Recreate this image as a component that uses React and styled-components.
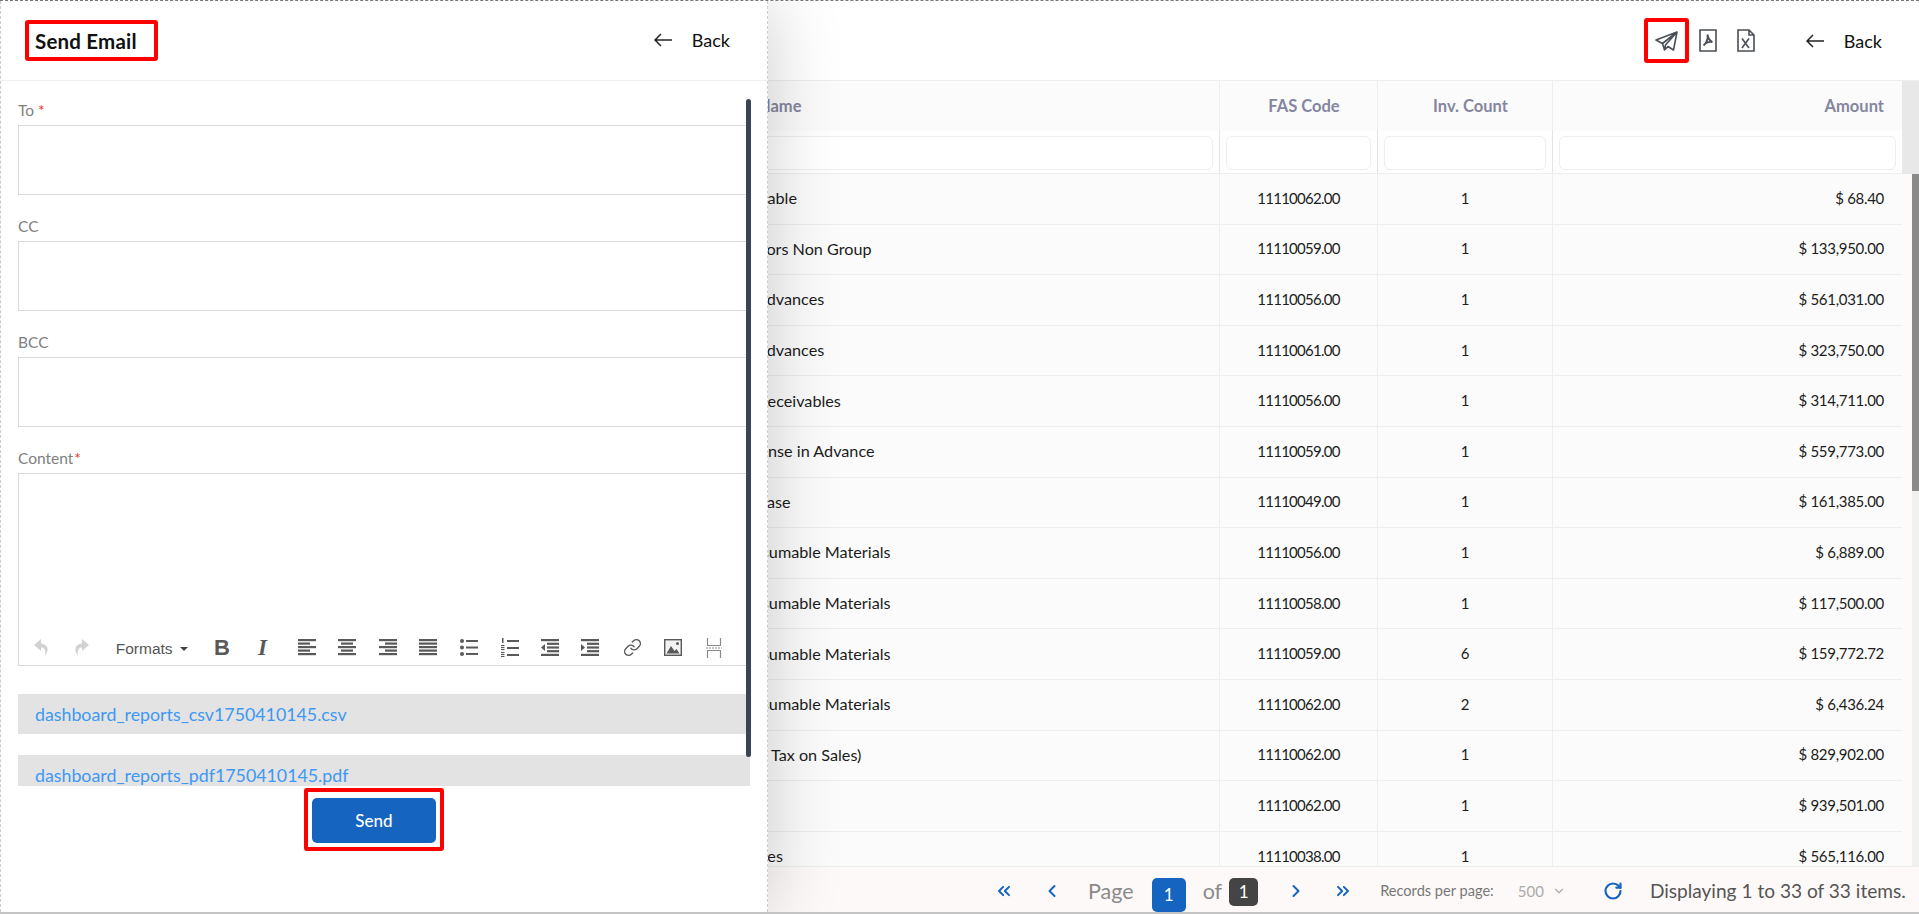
import React from 'react';
import styled, { createGlobalStyle } from 'styled-components';
import { ChevronsLeft, ChevronLeft, ChevronRight, ChevronsRight, ChevronDown, RotateCw, Link as LinkIcon } from 'lucide-react';

const Global = createGlobalStyle`
  html, body { margin: 0; padding: 0; background: #fff; font-family: Lato, "Noto Sans", sans-serif; }
  * { box-sizing: border-box; }
`;

const Page = styled.div`
  position: relative; width: 1919px; height: 914px; overflow: hidden;
  display: flex; flex-direction: column; background: #fff;
  border-top: 1px dashed #777; border-bottom: 2px solid #c4c4c4;
`;
const TopBar = styled.header`
  height: 80px; flex: none; display: flex; align-items: center; justify-content: flex-end;
  padding-right: 37px; border-bottom: 1px solid #eee; background: #fff;
`;
const Highlight = styled.div`
  border: 4px solid #f00; border-radius: 3px; display: flex; align-items: center; justify-content: center;
  width: ${p => p.$w}px; height: ${p => p.$h}px; flex: none;
`;
const IconSlot = styled.div`
  display: flex; align-items: center; margin-left: ${p => p.$ml}px;
`;
const BackLink = styled.div`
  display: flex; align-items: center; gap: 20px; font-size: 18px; color: #111; margin-left: ${p => p.$ml}px;
`;
const TableArea = styled.div`
  flex: 1; min-height: 0; display: flex; overflow: hidden;
`;
const Table = styled.div`
  width: 1902px; flex: none; overflow: hidden; background: #fbfbfb;
`;
const Row = styled.div`
  display: grid; grid-template-columns: 1219px 158px 175px 350px; height: ${p => p.$h}px;
  border-bottom: ${p => p.$flat ? 'none' : '1px solid #eeeeee'}; background: ${p => p.$bg || '#fbfbfb'};
`;
const HeadCell = styled.div`
  display: flex; align-items: center; font-size: 16.5px; font-weight: 700; color: #85869f;
  border-left: ${p => p.$first ? 'none' : '1px solid #eee'};
  justify-content: ${p => p.$align || 'center'};
  padding: ${p => p.$pad || '0 0 0 11px'};
`;
const FilterCell = styled.div`
  padding: 6px 6px 3px; border-left: ${p => p.$first ? 'none' : '1px solid #e4e4e4'};
`;
const FilterInput = styled.div`
  height: 34px; background: #fff; border: 1px solid #eee; border-radius: 6px;
`;
const NameCell = styled.div`
  display: flex; align-items: center; font-size: 16.2px; color: #1c1c1c; white-space: nowrap; padding-bottom: 2px;
`;
const CodeCell = styled.div`
  display: flex; align-items: center; justify-content: center; font-size: 15px; letter-spacing: -.72px; color: #1c1c1c;
  border-left: 1px solid #eee; padding-bottom: 2px;
`;
const CountCell = styled(CodeCell)`
  letter-spacing: 0;
`;
const AmountCell = styled(CodeCell)`
  justify-content: flex-end; padding-right: 18px; letter-spacing: -.3px;
`;
const Track = styled.div`
  width: 17px; flex: none; background: #fefaf9; display: flex; flex-direction: column; align-items: flex-end;
`;
const TrackHead = styled.div`
  height: 93px; width: 100%; background: #e8e8e8; flex: none;
`;
const Rail = styled.div`
  flex: 1; width: 7px; background: #f1f1f1;
`;
const Thumb = styled.div`
  width: 100%; height: 317px; background: #8a8a8a;
`;
const Footer = styled.footer`
  height: 46px; flex: none; background: #fdf9f8; display: flex; align-items: center; padding: 2px 0 0 994px;
  border-top: 1px solid #eee; overflow: hidden;
`;
const PagerBtn = styled.div`
  width: 20px; display: flex; justify-content: center; color: #1565c0; margin-left: ${p => p.$ml}px; flex: none;
`;
const PagerText = styled.span`
  font-size: ${p => p.$size}px; color: ${p => p.$color}; margin-left: ${p => p.$ml}px; white-space: nowrap; flex: none;
`;
const PageBox = styled.div`
  flex: none; display: flex; align-items: center; justify-content: center; color: #fff; font-size: 17px;
  width: ${p => p.$w}px; height: ${p => p.$h}px; background: ${p => p.$bg}; border-radius: 5px; margin-left: ${p => p.$ml}px;
  margin-top: ${p => p.$mt || 0}px;
`;
const Panel = styled.aside`
  position: absolute; left: 0; top: 0; bottom: 0; width: 768px; background: #fff; display: flex; flex-direction: column;
  border-left: 1px dashed #ccc; border-right: 1px dashed #ccc; box-shadow: 0 0 70px rgba(0,0,0,.2);
`;
const PanelHead = styled.div`
  height: 80px; flex: none; display: flex; align-items: center; justify-content: space-between;
  padding: 0 37px 0 24px; border-bottom: 1px solid #eee;
`;
const PanelBack = styled.div`
  margin-top: -2px;
`;
const TitleBox = styled.div`
  border: 4px solid #f00; border-radius: 3px; width: 133px; height: 41px; display: flex; align-items: center; padding-left: 6px;
  font-size: 20.5px; font-weight: 700; color: #111; letter-spacing: .2px; white-space: nowrap;
`;
const FormArea = styled.div`
  position: relative; height: 705px; flex: none; overflow: hidden; padding: 19px 17px 0 17px;
`;
const ScrollThumb = styled.div`
  position: absolute; left: 745px; top: 18px; width: 5px; height: 658px; background: #3a4453; border-radius: 3px;
`;
const Field = styled.div`
  margin-bottom: 21px;
`;
const Label = styled.div`
  font-size: 15.5px; color: #808080; height: 25px; line-height: 20px;
  b { color: #e33; font-weight: 400; margin-left: ${p => p.$star || 0}px; }
`;
const InputBox = styled.div`
  height: 70px; border: 1px solid #d9d9d9; border-right: none; background: #fff;
`;
const Editor = styled.div`
  height: 193px; border: 1px solid #d9d9d9; border-width: 1px 0 1.5px 1px; display: flex; align-items: flex-end;
  padding: 0 0 0 2px; margin-bottom: 28px;
`;
const Tool = styled.div`
  width: 40.4px; height: 35px; display: flex; align-items: center; justify-content: center; flex: none;
  color: ${p => p.$muted ? '#cfcfcf' : '#595959'}; margin-left: ${p => p.$ml || 0}px;
`;
const FormatsTool = styled.div`
  width: 100px; height: 33px; flex: none; display: flex; align-items: center; padding-left: 14px; gap: 7px;
  font-family: "Liberation Sans", sans-serif; font-size: 15.5px; color: #555;
  &::after { content: ''; border: 4px solid transparent; border-top: 4px solid #444; border-bottom: none; }
`;
const BoldGlyph = styled.span`
  font: 700 22px "Liberation Sans", sans-serif; color: #595959;
`;
const ItalicGlyph = styled.span`
  font: italic 700 23px "Liberation Serif", serif; color: #595959;
`;
const Attachment = styled.div`
  height: ${p => p.$h}px; background: #e3e3e3; margin-bottom: 21px; padding: ${p => p.$pt}px 0 0 17px;
  font-size: 17.8px; color: #3e98f5; line-height: 22px; width: 732px; overflow: hidden;
`;
const SendRow = styled.div`
  flex: 1; display: flex; justify-content: center; padding: 2px 20px 0 0;
`;
const SendFrame = styled.div`
  width: 140px; height: 63px; border: 4px solid #f00; border-radius: 3px; display: flex; align-items: center; justify-content: center;
`;
const SendButton = styled.button`
  width: 124px; height: 45px; border: none; border-radius: 5px; background: #1565c0; color: #fff;
  font: 500 17px Lato, sans-serif; margin-top: 1px;
`;

const Arrow = () => (
  <svg width="18" height="14" viewBox="0 0 18 14" fill="none" stroke="#222" strokeWidth="1.5"><path d="M18 7H1M7 1 1 7l6 6" /></svg>
);
const Plane = () => (
  <svg width="23" height="20" viewBox="0 0 23 20" fill="none" stroke="#4a4f55" strokeWidth="1.6" strokeLinejoin="round">
    <path d="M22 1 1 9l6.5 3.5L9.5 19l3.5-3.5 5.500 3.500ZM22 1 7.500 12.500M22 1 10.500 14l-1 5" />
  </svg>
);
const PdfFile = () => (
  <svg width="18" height="23" viewBox="0 0 18 23" fill="none" stroke="#4a4f55" strokeWidth="1.6">
    <path d="M1 1h16v21H1z" />
    <path d="M8.500 5.500c.5 3.500 1.500 6 5 7.500M8.500 5.500c.5 4-1 8.500-4 11M4.500 16.500c2-2.500 5.500-4 9-3.500" strokeWidth="1.800" />
  </svg>
);
const XlsFile = () => (
  <svg width="18" height="23" viewBox="0 0 18 23" fill="none" stroke="#4a4f55" strokeWidth="1.6">
    <path d="M1 1h11l5 5v16H1zM12 1v5h5" />
    <path d="M5 9.500l7 9.500M12 9.500l-7 9.500" />
  </svg>
);
const Lines = ({ kind }) => {
  const rows = {
    left: [[0, 18], [0, 12], [0, 18], [0, 12], [0, 18]],
    center: [[0, 18], [3, 12], [0, 18], [3, 12], [0, 18]],
    right: [[0, 18], [6, 12], [0, 18], [6, 12], [0, 18]],
    justify: [[0, 18], [0, 18], [0, 18], [0, 18], [0, 18]],
  }[kind];
  return (
    <svg width="18" height="17" viewBox="0 0 18 17" fill="#595959">
      {rows.map(([x, w], i) => <rect key={i} x={x} y={i * 3.500} width={w} height="2.200" />)}
    </svg>
  );
};
const Bullets = () => (
  <svg width="18" height="17" viewBox="0 0 18 17" fill="#595959">
    <circle cx="2" cy="2" r="2" /><circle cx="2" cy="8.500" r="2" /><circle cx="2" cy="15" r="2" />
    <rect x="6" y="1" width="12" height="2" /><rect x="6" y="7.500" width="12" height="2" /><rect x="6" y="14" width="12" height="2" />
  </svg>
);
const Numbers = () => (
  <svg width="18" height="19" viewBox="0 0 18 19" fill="#595959">
    <rect x="1" y="0" width="1.500" height="5" /><rect x="0" y="7" width="3.500" height="1.100" /><rect x="0" y="9" width="3.500" height="1.100" /><rect x="0" y="11" width="3.500" height="1.100" />
    <rect x="0" y="14" width="3.500" height="1.100" /><rect x="0" y="16" width="3.500" height="1.100" /><rect x="0" y="18" width="3.500" height="1" />
    <rect x="6" y="2" width="12" height="2" /><rect x="6" y="9" width="12" height="2" /><rect x="6" y="16" width="12" height="2" />
  </svg>
);
const Indent = ({ out }) => (
  <svg width="18" height="17" viewBox="0 0 18 17" fill="#595959">
    <rect y="0" width="18" height="2.200" /><rect y="14.800" width="18" height="2.200" />
    <rect x="6" y="3.700" width="12" height="2.200" /><rect x="6" y="7.400" width="12" height="2.200" /><rect x="6" y="11.100" width="12" height="2.200" />
    <path d={out ? 'M4 5v7L0 8.500Z' : 'M0 5v7l4-3.500Z'} />
  </svg>
);
const ImageIcon = () => (
  <svg width="18" height="17" viewBox="0 0 18 17">
    <rect x=".7" y=".7" width="16.600" height="15.600" fill="#f2f2f2" stroke="#595959" strokeWidth="1.400" />
    <path d="M2.500 14.500 7 7l3.500 5 2-2 3 4.500Z" fill="#595959" /><circle cx="13.500" cy="4.500" r="1.500" fill="#595959" />
  </svg>
);
const PageBreak = () => (
  <svg width="16" height="20" viewBox="0 0 16 20" fill="none" stroke="#8a8a8a" strokeWidth="1.200">
    <path d="M1.500 0v7.500h13V0M1.500 20v-7.500h13V20" /><path d="M0 10h16" strokeDasharray="2 1" />
  </svg>
);
const UndoIcon = ({ flip }) => (
  <svg width="15" height="17" viewBox="0 0 15 17" fill="#d2d2d2" style={flip ? { transform: 'scaleX(-1)' } : undefined}>
    <path d="M7 0 0 6l7 6V8.500c3 0 5 2 4 8.500 4-5 4-11.500-4-12.500Z" />
  </svg>
);

const rows = [
  ['Payable', '11110062.00', '1', '$ 68.40', 742],
  ['Vendors Non Group', '11110059.00', '1', '$ 133,950.00', 730],
  ['Advances', '11110056.00', '1', '$ 561,031.00', 756],
  ['Advances', '11110061.00', '1', '$ 323,750.00', 756],
  ['Receivables', '11110056.00', '1', '$ 314,711.00', 758],
  ['Expense in Advance', '11110059.00', '1', '$ 559,773.00', 733],
  ['Purchase', '11110049.00', '1', '$ 161,385.00', 726],
  ['Consumable Materials', '11110056.00', '1', '$ 6,889.00', 733],
  ['Consumable Materials', '11110058.00', '1', '$ 117,500.00', 733],
  ['Consumable Materials', '11110059.00', '6', '$ 159,772.72', 733],
  ['Consumable Materials', '11110062.00', '2', '$ 6,436.24', 733],
  ['( Tax on Sales)', '11110062.00', '1', '$ 829,902.00', 763],
  ['', '11110062.00', '1', '$ 939,501.00', 0],
  ['Salaries', '11110038.00', '1', '$ 565,116.00', 729],
];

export default function App() {
  return (
    <Page>
      <Global />
      <TopBar>
        <Highlight $w={45} $h={45}><Plane /></Highlight>
        <IconSlot $ml={10}><PdfFile /></IconSlot>
        <IconSlot $ml={20}><XlsFile /></IconSlot>
        <BackLink $ml={51}><Arrow />Back</BackLink>
      </TopBar>
      <TableArea>
        <Table>
          <Row $h={49} $flat>
            <HeadCell $first $align="flex-start" $pad="0 0 0 758px">Name</HeadCell>
            <HeadCell>FAS Code</HeadCell>
            <HeadCell>Inv. Count</HeadCell>
            <HeadCell $align="flex-end" $pad="0 18px 0 0">Amount</HeadCell>
          </Row>
          <Row $h={44} $bg="#fefefe">
            <FilterCell $first><FilterInput /></FilterCell>
            <FilterCell><FilterInput /></FilterCell>
            <FilterCell><FilterInput /></FilterCell>
            <FilterCell><FilterInput /></FilterCell>
          </Row>
          {rows.map((r, i) => (
            <Row key={i} $h={50.6}>
              <NameCell style={{ paddingLeft: r[4] }}>{r[0]}</NameCell>
              <CodeCell>{r[1]}</CodeCell>
              <CountCell>{r[2]}</CountCell>
              <AmountCell>{r[3]}</AmountCell>
            </Row>
          ))}
        </Table>
        <Track><TrackHead /><Rail><Thumb /></Rail></Track>
      </TableArea>
      <Footer>
        <PagerBtn $ml={0}><ChevronsLeft size={20} strokeWidth={2.4} /></PagerBtn>
        <PagerBtn $ml={28}><ChevronLeft size={20} strokeWidth={2.4} /></PagerBtn>
        <PagerText $size={21.5} $color="#8a8a8a" $ml={26}>Page</PagerText>
        <PageBox $w={34} $h={34} $bg="#1565c0" $ml={18} $mt={8}>1</PageBox>
        <PagerText $size={21.5} $color="#8a8a8a" $ml={17}>of</PagerText>
        <PageBox $w={29} $h={28} $bg="#444" $ml={7} $mt={2}>1</PageBox>
        <PagerBtn $ml={28}><ChevronRight size={20} strokeWidth={2.4} /></PagerBtn>
        <PagerBtn $ml={27}><ChevronsRight size={20} strokeWidth={2.4} /></PagerBtn>
        <PagerText $size={14.6} $color="#777" $ml={27}>Records per page:</PagerText>
        <PagerText $size={15} $color="#aaa" $ml={24}>500</PagerText>
        <PagerBtn $ml={5}><ChevronDown size={14} color="#aaa" /></PagerBtn>
        <PagerBtn $ml={34}><RotateCw size={20} strokeWidth={2.6} /></PagerBtn>
        <PagerText $size={19.1} $color="#555" $ml={27}>Displaying 1 to 33 of 33 items.</PagerText>
      </Footer>
      <Panel>
        <PanelHead>
          <TitleBox>Send Email</TitleBox>
          <PanelBack><BackLink $ml={0}><Arrow />Back</BackLink></PanelBack>
        </PanelHead>
        <FormArea>
          <Field><Label $star={4}>To<b>*</b></Label><InputBox /></Field>
          <Field><Label>CC</Label><InputBox /></Field>
          <Field><Label>BCC</Label><InputBox /></Field>
          <Label $star={1}>Content<b>*</b></Label>
          <Editor>
            <Tool $muted><UndoIcon /></Tool>
            <Tool $muted><UndoIcon flip /></Tool>
            <FormatsTool>Formats</FormatsTool>
            <Tool><BoldGlyph>B</BoldGlyph></Tool>
            <Tool><ItalicGlyph>I</ItalicGlyph></Tool>
            <Tool $ml={4}><Lines kind="left" /></Tool>
            <Tool><Lines kind="center" /></Tool>
            <Tool><Lines kind="right" /></Tool>
            <Tool><Lines kind="justify" /></Tool>
            <Tool $ml={1}><Bullets /></Tool>
            <Tool><Numbers /></Tool>
            <Tool><Indent out /></Tool>
            <Tool><Indent /></Tool>
            <Tool $ml={2}><LinkIcon size={19} strokeWidth={1.8} /></Tool>
            <Tool><ImageIcon /></Tool>
            <Tool><PageBreak /></Tool>
          </Editor>
          <Attachment $h={40} $pt={9}>dashboard_reports_csv1750410145.csv</Attachment>
          <Attachment $h={40} $pt={9}>dashboard_reports_pdf1750410145.pdf</Attachment>
          <ScrollThumb />
        </FormArea>
        <SendRow>
          <SendFrame><SendButton>Send</SendButton></SendFrame>
        </SendRow>
      </Panel>
    </Page>
  );
}
